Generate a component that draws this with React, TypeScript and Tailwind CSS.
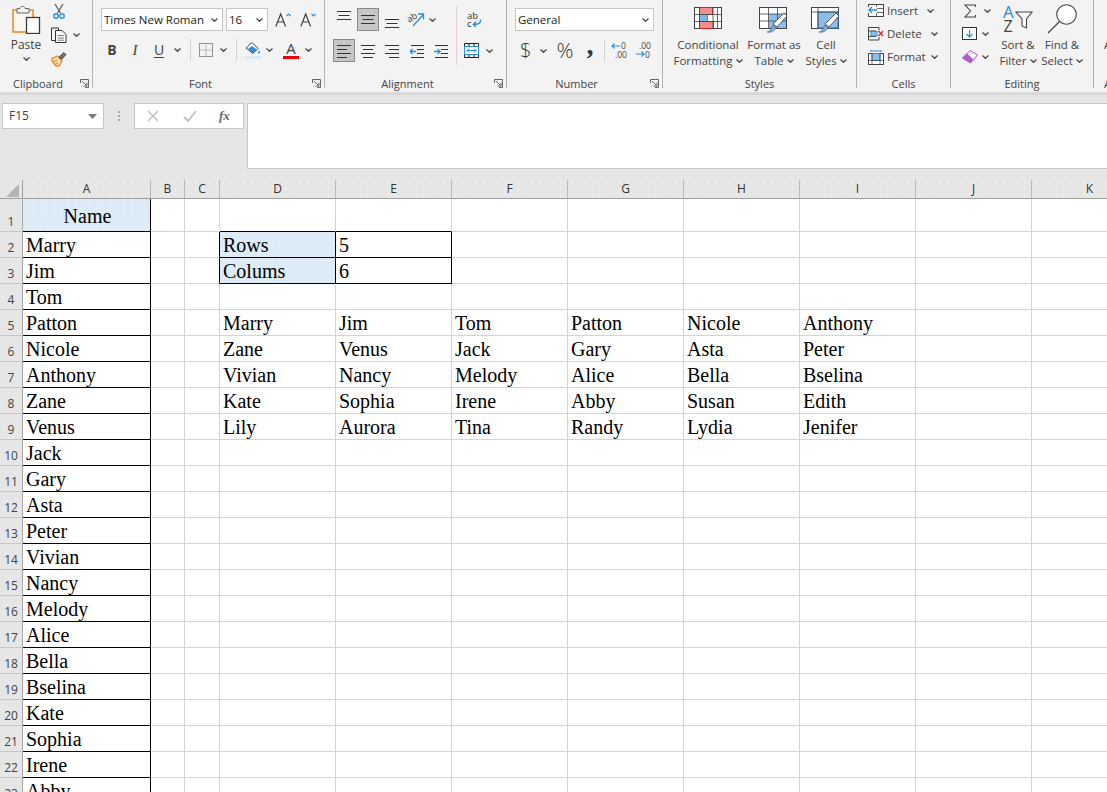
import type { ReactNode } from "react";

const columns = ["A", "B", "C", "D", "E", "F", "G", "H", "I", "J", "K"];

const names = [
  "Marry", "Jim", "Tom", "Patton", "Nicole", "Anthony", "Zane", "Venus", "Jack", "Gary", "Asta",
  "Peter", "Vivian", "Nancy", "Melody", "Alice", "Bella", "Bselina", "Kate", "Sophia", "Irene", "Abby",
];

const table = [
  ["Marry", "Jim", "Tom", "Patton", "Nicole", "Anthony"],
  ["Zane", "Venus", "Jack", "Gary", "Asta", "Peter"],
  ["Vivian", "Nancy", "Melody", "Alice", "Bella", "Bselina"],
  ["Kate", "Sophia", "Irene", "Abby", "Susan", "Edith"],
  ["Lily", "Aurora", "Tina", "Randy", "Lydia", "Jenifer"],
];

const rows = Array.from({ length: 23 }, (_, i) => i + 1);

const greyDots = "bg-[radial-gradient(circle,#f1f1e4_0.5px,transparent_0.8px)] bg-[length:7px_6px]";
const blueDots = "bg-[radial-gradient(circle,#e9f1f6_0.5px,transparent_0.8px)] bg-[length:7px_6px]";

function Chevron({ className = "" }: { className?: string }) {
  return (
    <svg width="7" height="4" viewBox="0 0 7 4" className={`shrink-0 ${className}`}>
      <path d="M0.5 0.5 3.5 3.3 6.5 0.5" fill="none" stroke="#444" strokeWidth="1.2" />
    </svg>
  );
}

function Launcher() {
  return (
    <svg width="9" height="9" viewBox="0 0 9 9">
      <path d="M0.5 4V0.5H8.5V8.5H5M2 2 7 7M7 3.5V7H3.5" fill="none" stroke="#666" strokeWidth="1" />
    </svg>
  );
}

function Group({ width, label, launcher = true, children }: { width: string; label: string; launcher?: boolean; children: ReactNode }) {
  return (
    <section className={`flex h-[88px] shrink-0 flex-col border-r border-[#b4b4b4] ${width}`}>
      <div className="flex-1">{children}</div>
      <div className="-mb-[3px] flex h-[16px] items-center text-[#444]">
        <span className="flex-1 text-center text-[11px] leading-none">{label}</span>
        {launcher && (
          <div className="ml-[1px] mr-[3px] flex w-[12px] justify-end">
            <Launcher />
          </div>
        )}
      </div>
    </section>
  );
}

function Combo({ width, text }: { width: string; text: string }) {
  return (
    <div className={`flex h-[23px] shrink-0 items-center justify-between border border-[#c6c6c6] bg-white pl-[2px] pr-[4px] text-[11.5px] text-[#222] ${width}`}>
      <span className="whitespace-nowrap">{text}</span>
      <Chevron />
    </div>
  );
}

function Sep({ className = "" }: { className?: string }) {
  return <div className={`h-[22px] w-px shrink-0 bg-[#dccfcf] ${className}`} />;
}

function VAlign({ y }: { y: number }) {
  return (
    <svg width="14" height="18" viewBox="0 0 14 18" className="shrink-0">
      <path d={`M0 ${y + 0.5}H14M1.500 ${y + 4.5}H12.500M0 ${y + 8.5}H14`} stroke="#333" strokeWidth="1" />
    </svg>
  );
}

function AlignRows({ kind }: { kind: "left" | "center" | "right" }) {
  const d = {
    left: "M0 2.5H14M0 6.5H10M0 10.5H14M0 14.5H10",
    center: "M0 2.5H14M2 6.5H12M0 10.5H14M2 14.5H12",
    right: "M0 2.5H14M4 6.5H14M0 10.5H14M4 14.5H14",
  }[kind];
  return (
    <svg width="14" height="16" viewBox="0 0 14 16" className="shrink-0">
      <path d={d} stroke="#333" strokeWidth="1" />
    </svg>
  );
}

function IndentIcon({ flip = false }: { flip?: boolean }) {
  return (
    <svg width="14" height="16" viewBox="0 0 14 16" className="shrink-0">
      <path d="M1 2.500H14M7 6.500H14M7 10.500H14M1 14.500H14" stroke="#333" strokeWidth="1" />
      <path d={flip ? "M0 8.500H6M3.500 6 6 8.500 3.500 11" : "M6 8.500H0M2.500 6 0 8.500 2.500 11"} fill="none" stroke="#2b8fd9" strokeWidth="1.3" />
    </svg>
  );
}

function BigLabel({ lines }: { lines: [string, string] }) {
  return (
    <div className="flex flex-col items-center text-[11.5px] leading-[16px] text-[#444]">
      <span className="whitespace-nowrap">{lines[0]}</span>
      <span className="flex items-center gap-[3px] whitespace-nowrap">
        {lines[1]}
        <Chevron />
      </span>
    </div>
  );
}

function PasteIcon() {
  return (
    <svg width="29" height="30" viewBox="0 0 29 30">
      <rect x="1" y="6" width="20" height="22" fill="#fbf6ee" stroke="#e98f2e" strokeWidth="1.6" />
      <path d="M5 9V4.500H8C8.500 1.500 12.500 1.500 13 4.500H17V9Z" fill="#f4f4f4" stroke="#666" />
      <rect x="14.500" y="13.500" width="13" height="16" fill="#fff" stroke="#3a3a3a" strokeWidth="1.3" />
    </svg>
  );
}

function CutIcon() {
  return (
    <svg width="16" height="16" viewBox="0 0 16 16">
      <path d="M4 1 9.500 10M12 1 6.500 10" fill="none" stroke="#555" strokeWidth="1.2" />
      <circle cx="5" cy="13" r="2.200" fill="none" stroke="#2b8fd9" strokeWidth="1.4" />
      <circle cx="11" cy="13" r="2.200" fill="none" stroke="#2b8fd9" strokeWidth="1.4" />
    </svg>
  );
}

function CopyIcon() {
  return (
    <svg width="16" height="16" viewBox="0 0 16 16">
      <path d="M5 13.500H0.500V1H7.500V3.500" fill="none" stroke="#333" />
      <path d="M4.500 3.500H11L15 7.500V15.500H4.500Z" fill="#fff" stroke="#333" />
      <path d="M6.500 8.500H13M6.500 11H13M6.500 13.200H13" stroke="#555" strokeWidth="0.8" />
    </svg>
  );
}

function PainterIcon() {
  return (
    <svg width="16" height="16" viewBox="0 0 16 16">
      <path d="M1 7.500 6.500 5 11 10 8 15 5 15 1 10Z" fill="#fbe3c2" stroke="#e98f2e" strokeWidth="1.4" />
      <path d="M2 11 6 9M4 14 7 11" stroke="#e98f2e" strokeWidth="1.1" />
      <path d="M8 6 13 1.500 15 3.500 10.500 8.500Z" fill="#777" stroke="#333" strokeWidth="0.8" />
    </svg>
  );
}

function FontSizeIcon({ up }: { up: boolean }) {
  return (
    <svg width="16" height="16" viewBox="0 0 16 16" className="shrink-0">
      <path d="M0.800 14.500 5.700 2 10.600 14.500M2.600 10H8.800" fill="none" stroke="#444" strokeWidth="1.2" />
      <path d={up ? "M11.500 4 13.500 2 15.500 4" : "M11.500 2 13.500 4 15.500 2"} fill="none" stroke="#2b8fd9" strokeWidth="1.1" />
    </svg>
  );
}

function BordersIcon() {
  return (
    <svg width="16" height="16" viewBox="0 0 16 16" className="shrink-0">
      <rect x="1.500" y="1.500" width="13" height="13" fill="none" stroke="#333" strokeDasharray="1 1" />
      <path d="M8 1.500V14.500M1.500 8H14.500" stroke="#888" strokeDasharray="1 1" />
    </svg>
  );
}

function FillIcon() {
  return (
    <svg width="16" height="18" viewBox="0 0 16 18" className="shrink-0">
      <path d="M1 7 7 1.500 13 7.500 8 12.500Z" fill="#fff" stroke="#444" />
      <path d="M7 5 12 8.500 8 12.500 3 8Z" fill="#2b8fd9" />
      <path d="M14 9c1.300 2 1.300 3.500 0 3.500S12.700 11 14 9Z" fill="#2b8fd9" />
      <rect x="0" y="15" width="16" height="3" fill="#dce8f3" />
    </svg>
  );
}

function OrientationIcon() {
  return (
    <svg width="17" height="17" viewBox="0 0 17 17" className="shrink-0 overflow-visible">
      <text x="0" y="10" fontSize="9" fill="#333" transform="rotate(-30 4 9)">ab</text>
      <path d="M5 15 15 4M10 3H15.500V8.500" fill="none" stroke="#2b8fd9" strokeWidth="1.3" />
    </svg>
  );
}

function WrapIcon() {
  return (
    <svg width="16" height="18" viewBox="0 0 16 18" className="shrink-0 overflow-visible">
      <text x="1" y="8" fontSize="9.500" fill="#333">ab</text>
      <text x="1" y="16" fontSize="9.500" fill="#333">c</text>
      <path d="M14.500 8.500C15 13 11 13.500 7.500 13.500M10 10.800 7.200 13.500 10 16" fill="none" stroke="#2b8fd9" strokeWidth="1.3" />
    </svg>
  );
}

function MergeIcon() {
  return (
    <svg width="15" height="15" viewBox="0 0 15 15" className="shrink-0">
      <path d="M0.500 3.500V0.500H14.500V3.500M0.500 11.500V14.500H14.500V11.500" fill="none" stroke="#222" />
      <path d="M5 0.500V3M10 0.500V3M5 12V14.500M10 12V14.500" stroke="#222" />
      <rect x="0.500" y="3.500" width="14" height="8" fill="#fff" stroke="#2b8fd9" />
      <path d="M3 7.500H12M5 5.500 3 7.500 5 9.500M10 5.500 12 7.500 10 9.500" fill="none" stroke="#2b8fd9" />
    </svg>
  );
}

function DecimalIcon({ more }: { more: boolean }) {
  return (
    <svg width="16" height="17" viewBox="0 0 16 17" className="shrink-0 overflow-visible">
      <text x={more ? 3 : 9} y="7" fontSize="8.500" fill="#444">{more ? ".00" : "0"}</text>
      <text x={more ? 9 : 3} y="16" fontSize="8.500" fill="#444">{more ? "0" : ".00"}</text>
      <path
        d={more ? "M0 12H8M5.500 9.500 8 12 5.500 14.500" : "M0 4H8M2.500 1.500 0 4 2.500 6.500"}
        fill="none"
        stroke="#2b8fd9"
        strokeWidth="1.1"
      />
    </svg>
  );
}

function ConditionalIcon() {
  return (
    <svg width="28" height="22" viewBox="0 0 28 22">
      <rect x="0.500" y="0.500" width="27" height="21" fill="#fff" stroke="#444" />
      <rect x="5.500" y="0.500" width="13" height="7" fill="#f28d8d" stroke="#e02020" />
      <rect x="5.500" y="7.500" width="8" height="7" fill="#7fb6e6" stroke="#2b8fd9" />
      <rect x="5.500" y="14.500" width="14" height="7" fill="#f28d8d" stroke="#e02020" />
      <path d="M19 0V22M23.500 0V22M0 7.500H28M0 14.500H28M5.500 0V22" stroke="#444" strokeWidth="0.800" fill="none" />
    </svg>
  );
}

function Brush() {
  return (
    <>
      <path d="M14 17 25 6 28 9 18 20Z" fill="#fff" stroke="#555" />
      <path d="M8 25C11 25 12 21 14 18L17 21C15 24 12 26 8 25Z" fill="#7ca7d6" stroke="#557" strokeWidth="0.600" />
    </>
  );
}

function TableStyleIcon() {
  return (
    <svg width="30" height="27" viewBox="0 0 30 27">
      <rect x="0.500" y="0.500" width="27" height="21" fill="#fff" stroke="#444" />
      <rect x="10" y="7" width="17" height="14" fill="#8cbde8" />
      <path d="M0 7H28M0 14H28M9.500 0V22M18.500 0V22" stroke="#444" strokeWidth="0.800" />
      <Brush />
    </svg>
  );
}

function CellStyleIcon() {
  return (
    <svg width="30" height="27" viewBox="0 0 30 27">
      <rect x="0.500" y="0.500" width="27" height="21" fill="#fff" stroke="#444" />
      <rect x="7" y="5" width="20" height="16" fill="#8cbde8" stroke="#2673b8" />
      <path d="M7 0V22M0 5H28" stroke="#444" strokeWidth="0.800" />
      <Brush />
    </svg>
  );
}

function InsertIcon() {
  return (
    <svg width="16" height="14" viewBox="0 0 16 14" className="shrink-0">
      <rect x="0.500" y="0.500" width="15" height="12" fill="#fff" stroke="#444" />
      <path d="M8.500 0V13M8.500 4.500H16M8.500 8.500H16" stroke="#444" strokeWidth="0.800" />
      <rect x="0" y="3" width="9" height="6" fill="#fff" />
      <path d="M9 6H1M4 3 1 6 4 9" fill="none" stroke="#2b8fd9" strokeWidth="1.300" />
    </svg>
  );
}

function DeleteIcon() {
  return (
    <svg width="16" height="14" viewBox="0 0 16 14" className="shrink-0">
      <path d="M0.500 0.500H11V3.500M0.500 13H11V10M0.500 0.500V13M0.500 4H8M0.500 9.500H8" fill="none" stroke="#444" />
      <rect x="3" y="4.500" width="6" height="4.500" fill="#8cbde8" stroke="#2b8fd9" />
      <path d="M10.500 4 15 9M15 4 10.500 9" stroke="#e03030" strokeWidth="1.400" />
    </svg>
  );
}

function FormatIcon() {
  return (
    <svg width="16" height="16" viewBox="0 0 16 16" className="shrink-0">
      <path d="M3 1V3M13 1V3M3 2H13" stroke="#2b8fd9" />
      <rect x="0.500" y="4.500" width="15" height="11" fill="#fff" stroke="#444" />
      <rect x="4" y="4.500" width="8" height="7" fill="#8cbde8" stroke="#2b8fd9" />
      <path d="M0 11.500H16M4 4V16M12 4V16" stroke="#444" strokeWidth="0.700" />
    </svg>
  );
}

function SumIcon() {
  return (
    <svg width="12" height="14" viewBox="0 0 12 14" className="shrink-0">
      <path d="M11.500 3V1H1L6.500 7 1 13H11.500V11" fill="none" stroke="#444" strokeWidth="1.100" />
    </svg>
  );
}

function FillDownIcon() {
  return (
    <svg width="15" height="13" viewBox="0 0 15 13" className="shrink-0">
      <rect x="0.500" y="0.500" width="14" height="12" fill="#fff" stroke="#333" />
      <path d="M7.500 3V10M4.500 7 7.500 10 10.500 7" fill="none" stroke="#2b8fd9" strokeWidth="1.200" />
    </svg>
  );
}

function EraserIcon() {
  return (
    <svg width="16" height="14" viewBox="0 0 16 14" className="shrink-0">
      <path d="M0.500 8 8 0.500 15.500 5 8.500 13Z" fill="#fff" stroke="#a04fc0" />
      <path d="M0.500 8 5 3.500 11.500 9.500 8.500 13Z" fill="#b05cc8" />
    </svg>
  );
}

function SortFilterIcon() {
  return (
    <svg width="30" height="30" viewBox="0 0 30 30" className="overflow-visible">
      <text x="0" y="14" fontSize="17" fill="#2b8fd9">A</text>
      <text x="0.500" y="28" fontSize="16" fill="#444">Z</text>
      <path d="M13 8H29L23.500 15V24L19 22V15Z" fill="#fff" stroke="#444" strokeWidth="1.100" />
    </svg>
  );
}

function FindIcon() {
  return (
    <svg width="30" height="30" viewBox="0 0 30 30">
      <circle cx="19.500" cy="10.500" r="9.800" fill="#fff" stroke="#444" strokeWidth="1.100" />
      <path d="M1 29 12.500 17.500" stroke="#444" strokeWidth="1.200" />
    </svg>
  );
}

function Ribbon() {
  return (
    <div className="flex h-[92px] w-[1107px] bg-[#f3f3f3] font-['Open_Sans',sans-serif]">
      <Group width="w-[93px]" label="Clipboard">
        <div className="flex">
          <div className="flex w-[51px] flex-col items-center pl-[1px] pt-[4px]">
            <PasteIcon />
            <span className="mt-[3px] text-[12px] leading-[16px] text-[#444]">Paste</span>
            <Chevron className="mt-[4px]" />
          </div>
          <div className="flex flex-col gap-[8px] pt-[3px]">
            <CutIcon />
            <div className="flex items-center gap-[6px]">
              <CopyIcon />
              <Chevron />
            </div>
            <PainterIcon />
          </div>
        </div>
      </Group>

      <Group width="w-[232px]" label="Font">
        <div className="mt-[8px] flex h-[23px] items-center pl-[8px]">
          <Combo width="w-[122px]" text="Times New Roman" />
          <Combo width="ml-[3px] w-[42px]" text="16" />
          <div className="ml-[7px]"><FontSizeIcon up /></div>
          <div className="ml-[9px]"><FontSizeIcon up={false} /></div>
        </div>
        <div className="mt-[8px] flex h-[22px] items-center pl-[11px] text-[#444]">
          <span className="w-[16px] text-center text-[14px] font-bold leading-none">B</span>
          <span className="ml-[7px] w-[16px] text-center font-['Liberation_Serif',serif] text-[15px] italic leading-none">I</span>
          <span className="ml-[8px] w-[16px] text-center text-[14px] leading-none underline underline-offset-2">U</span>
          <Chevron className="ml-[7px]" />
          <Sep className="ml-[9px]" />
          <div className="ml-[7px]"><BordersIcon /></div>
          <Chevron className="ml-[6px]" />
          <Sep className="ml-[9px]" />
          <div className="ml-[8px]"><FillIcon /></div>
          <Chevron className="ml-[5px]" />
          <div className="ml-[10px] flex w-[16px] flex-col items-center">
            <span className="text-[15px] leading-[15px]">A</span>
            <div className="h-[3px] w-[16px] bg-[#f00000]" />
          </div>
          <Chevron className="ml-[6px]" />
        </div>
      </Group>

      <Group width="w-[182px]" label="Alignment">
        <div className="flex">
          <div className="w-[131px]">
            <div className="mt-[8px] flex h-[23px] items-center pl-[12px]">
              <VAlign y={0} />
              <div className="ml-[6px] flex h-[23px] w-[22px] items-center justify-center border border-[#8a8a8a] bg-[#c6c6c6]">
                <VAlign y={4} />
              </div>
              <div className="ml-[6px]"><VAlign y={8} /></div>
              <div className="ml-[9px]"><OrientationIcon /></div>
              <Chevron className="ml-[4px]" />
            </div>
            <div className="mt-[8px] flex h-[23px] items-center pl-[8px]">
              <div className="flex h-[23px] w-[22px] items-center justify-center border border-[#8a8a8a] bg-[#c6c6c6]">
                <AlignRows kind="left" />
              </div>
              <div className="ml-[6px]"><AlignRows kind="center" /></div>
              <div className="ml-[10px]"><AlignRows kind="right" /></div>
              <div className="ml-[11px]"><IndentIcon /></div>
              <div className="ml-[10px]"><IndentIcon flip /></div>
            </div>
          </div>
          <div className="mt-[6px] h-[59px] w-px bg-[#dccfcf]" />
          <div className="pl-[9px]">
            <div className="mt-[8px] flex h-[23px] items-center"><WrapIcon /></div>
            <div className="mt-[8px] flex h-[23px] items-center">
              <div className="-ml-[2px]"><MergeIcon /></div>
              <Chevron className="ml-[7px]" />
            </div>
          </div>
        </div>
      </Group>

      <Group width="w-[156px]" label="Number">
        <div className="mt-[8px] flex h-[23px] items-center pl-[8px]">
          <Combo width="w-[139px]" text="General" />
        </div>
        <div className="mt-[8px] flex h-[23px] items-center pl-[13px] text-[#333]">
          <span className="w-[10px] text-center text-[20px] font-light leading-none">$</span>
          <Chevron className="ml-[10px]" />
          <span className="ml-[9px] w-[18px] text-center text-[21px] font-light leading-none">%</span>
          <span className="ml-[12px] w-[8px] -translate-y-[6px] text-center font-['Liberation_Serif',serif] text-[28px] font-bold leading-[14px]">,</span>
          <Sep className="ml-[10px]" />
          <div className="ml-[7px]"><DecimalIcon more={false} /></div>
          <div className="ml-[8px]"><DecimalIcon more /></div>
        </div>
      </Group>

      <Group width="w-[194px]" label="Styles" launcher={false}>
        <div className="flex pl-[5px] pt-[7px]">
          <div className="flex w-[80px] flex-col items-center">
            <div className="h-[30px]"><ConditionalIcon /></div>
            <BigLabel lines={["Conditional", "Formatting"]} />
          </div>
          <div className="flex w-[52px] flex-col items-center">
            <div className="h-[30px]"><TableStyleIcon /></div>
            <BigLabel lines={["Format as", "Table"]} />
          </div>
          <div className="flex w-[52px] flex-col items-center">
            <div className="h-[30px]"><CellStyleIcon /></div>
            <BigLabel lines={["Cell", "Styles"]} />
          </div>
        </div>
      </Group>

      <Group width="w-[94px]" label="Cells" launcher={false}>
        <div className="-mt-[1px] flex flex-col pl-[11px] text-[11.5px] text-[#444]">
          <div className="flex h-[23px] items-center gap-[3px]"><InsertIcon /><span>Insert</span><Chevron className="ml-[6px]" /></div>
          <div className="flex h-[23px] items-center gap-[3px]"><DeleteIcon /><span>Delete</span><Chevron className="ml-[6px]" /></div>
          <div className="flex h-[23px] items-center gap-[3px]"><FormatIcon /><span>Format</span><Chevron className="ml-[2px]" /></div>
        </div>
      </Group>

      <Group width="w-[143px]" label="Editing" launcher={false}>
        <div className="flex">
          <div className="-mt-[1px] flex w-[45px] flex-col pl-[11px]">
            <div className="flex h-[23px] items-center"><div className="ml-[2px]"><SumIcon /></div><Chevron className="ml-[8px]" /></div>
            <div className="flex h-[23px] items-center"><FillDownIcon /><Chevron className="ml-[5px]" /></div>
            <div className="flex h-[23px] items-center"><EraserIcon /><Chevron className="ml-[4px]" /></div>
          </div>
          <div className="flex w-[44px] flex-col items-center pt-[4px]">
            <div className="h-[33px]"><SortFilterIcon /></div>
            <BigLabel lines={["Sort &", "Filter"]} />
          </div>
          <div className="flex w-[44px] flex-col items-center pt-[4px]">
            <div className="h-[33px]"><FindIcon /></div>
            <BigLabel lines={["Find &", "Select"]} />
          </div>
        </div>
      </Group>

      <div className="flex h-[88px] flex-col pl-[10px] text-[11.500px] text-[#444]">
        <span className="mt-[37px] leading-[16px]">Analyze</span>
        <span className="mt-[23px] text-[11px] leading-[16px]">Analysis</span>
      </div>
    </div>
  );
}

function FormulaBar() {
  return (
    <div className="flex h-[85px] w-[1107px] bg-[#e6e6e6] pt-[8px] font-['Open_Sans',sans-serif]">
      <div className="ml-[2px] flex h-[26px] w-[102px] items-center justify-between border border-[#c6c6c6] bg-white pl-[6px] pr-[6px] text-[12px] text-[#444]">
        <span>F15</span>
        <svg width="9" height="5" viewBox="0 0 9 5"><path d="M0 0H9L4.500 5Z" fill="#777" /></svg>
      </div>
      <div className="ml-[14px] mt-[8px] flex h-[10px] w-[2px] flex-col justify-between">
        <div className="h-[2px] bg-[#a8a8a8]" />
        <div className="h-[2px] bg-[#a8a8a8]" />
        <div className="h-[2px] bg-[#a8a8a8]" />
      </div>
      <div className="ml-[14px] flex h-[26px] w-[110px] items-center border border-[#c6c6c6] bg-white pl-[12px]">
        <svg width="12" height="12" viewBox="0 0 12 12"><path d="M1 1 11 11M11 1 1 11" stroke="#c4c4c4" strokeWidth="1.500" /></svg>
        <svg width="14" height="12" viewBox="0 0 14 12" className="ml-[24px]"><path d="M1 7 5 11 13 1" fill="none" stroke="#c4c4c4" strokeWidth="2" /></svg>
        <span className="ml-[22px] font-['Liberation_Serif',serif] text-[13px] font-bold italic text-[#666]">fx</span>
      </div>
      <div className="ml-[3px] h-[66px] flex-1 border border-r-0 border-[#c6c6c6] bg-white" />
    </div>
  );
}

function Cell({ row, col }: { row: number; col: string }) {
  let text = "";
  let align = "text-left";
  let tone = "bg-white";
  let right = "border-r-[#d4d4d4]";
  let bottom = "border-b-[#d4d4d4]";
  let drop = "";

  if (col === "A") {
    right = "border-r-black";
    bottom = "border-b-black";
    if (row === 1) {
      text = "Name";
      align = "text-center";
      tone = `bg-[#ddebf6] ${blueDots}`;
      drop = "pb-[3px]";
    } else {
      text = names[row - 2] ?? "";
    }
  }
  if ((col === "D" || col === "E") && row === 1) bottom = "border-b-black";
  if (col === "C" && (row === 2 || row === 3)) right = "border-r-black";
  if ((col === "D" || col === "E") && (row === 2 || row === 3)) {
    right = "border-r-black";
    bottom = "border-b-black";
    if (col === "D") {
      text = row === 2 ? "Rows" : "Colums";
      tone = `bg-[#ddebf6] ${blueDots}`;
    } else {
      text = row === 2 ? "5" : "6";
    }
  }
  if (row >= 5 && row <= 9) {
    const index = ["D", "E", "F", "G", "H", "I"].indexOf(col);
    if (index >= 0) text = table[row - 5][index];
  }

  return (
    <div className={`flex items-end overflow-hidden whitespace-nowrap border-b border-r pl-[3px] pr-[1px] font-['Liberation_Serif',serif] text-[20px] leading-[24px] text-black ${drop} ${right} ${bottom} ${tone}`}>
      <span className={`w-full ${align}`}>{text}</span>
    </div>
  );
}

function Sheet() {
  return (
    <div className="grid w-[1107px] grid-cols-[23px_128px_34px_35px_116px_116px_116px_116px_116px_116px_116px_116px] grid-rows-[19px_33px_repeat(22,26px)]">
      <div className="flex items-end justify-end border-b border-r border-[#a0a0a0] bg-[#e6e6e6] pb-[1px] pr-[3px]">
        <svg width="13" height="13" viewBox="0 0 13 13"><path d="M13 0V13H0Z" fill="#b5b5b5" /></svg>
      </div>
      {columns.map((col) => (
        <div
          key={col}
          className={`flex items-center justify-center border-b border-r border-b-[#a0a0a0] border-r-[#b8b8b8] bg-[#e6e6e6] font-['Open_Sans',sans-serif] text-[12px] leading-none text-[#333] ${greyDots}`}
        >
          {col}
        </div>
      ))}
      {rows.map((row) => (
        <div key={row} className="contents">
          <div className="flex items-end justify-center border-b border-r border-b-[#c8c8c8] border-r-[#a8a8a8] bg-[#e6e6e6] font-['Open_Sans',sans-serif] text-[12px] leading-[18px] text-[#444]">
            {row}
          </div>
          {columns.map((col) => (
            <Cell key={col} row={row} col={col} />
          ))}
        </div>
      ))}
    </div>
  );
}

export default function App() {
  return (
    <div className="h-[792px] w-[1107px] overflow-hidden bg-white">
      <Ribbon />
      <div className="h-[3px] w-[1107px] bg-[#d9d9d9]" />
      <FormulaBar />
      <Sheet />
    </div>
  );
}
